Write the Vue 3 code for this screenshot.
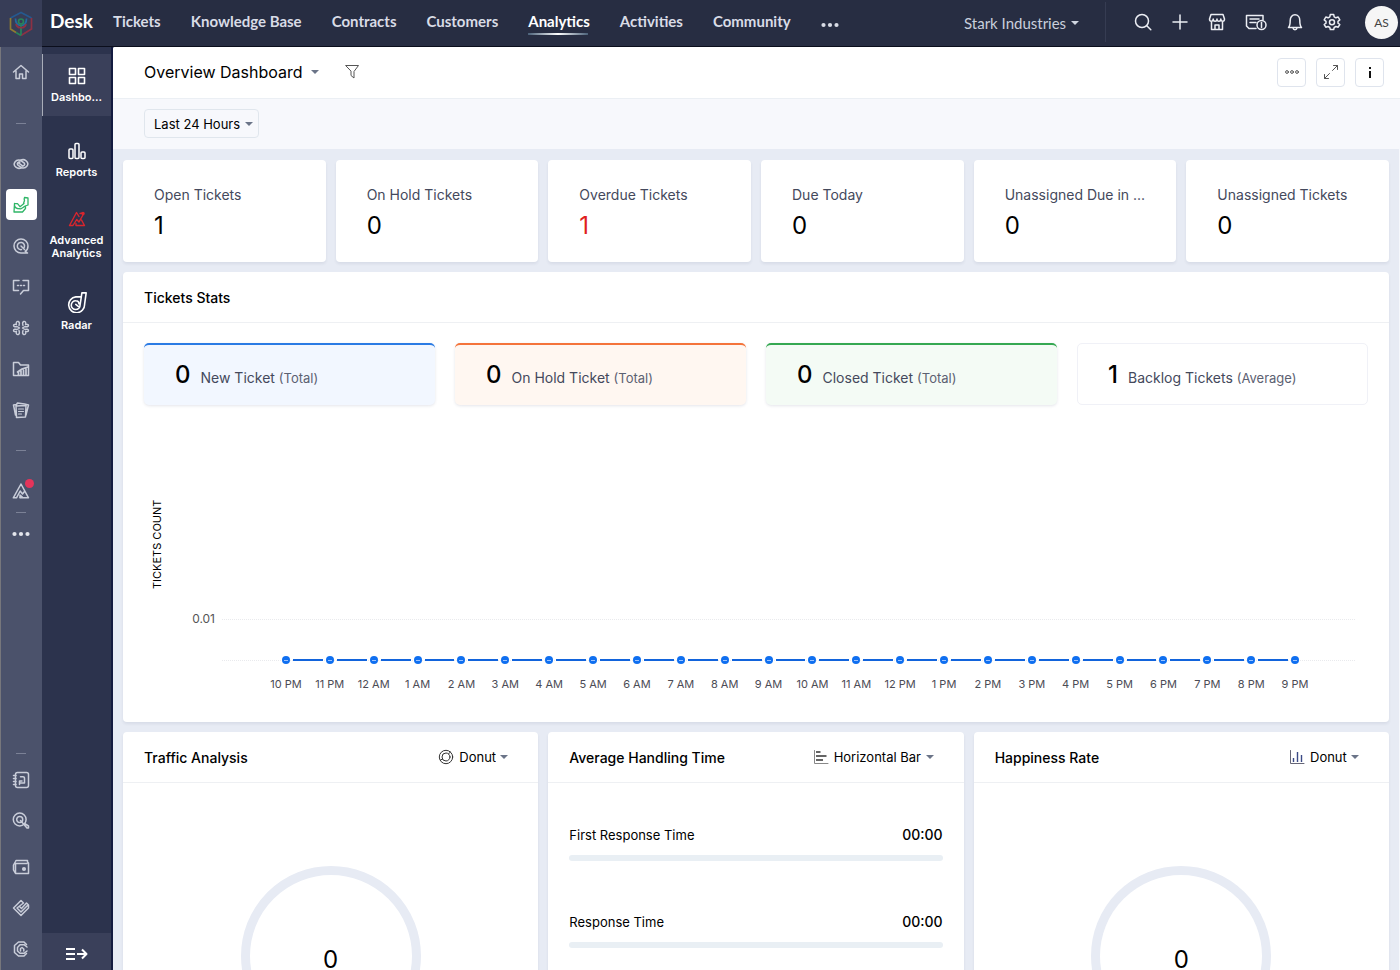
<script setup>
import { h } from 'vue'

const icons = {
  home: '<path d="M1.500 9 9 2.500 16.500 9M4 8v7.500h3.500v-4.500h3v4.500H14V8"/>',
  link: '<path d="M9.800 12.300A4.600 4.100 0 1 1 8.600 5.300L12.300 8.200A1.700 1.700 0 0 1 10.200 10.700L6.500 7.800"/><path d="M8.200 5.700A4.600 4.100 0 1 1 9.400 12.700L5.700 9.800A1.700 1.700 0 0 1 7.800 7.300"/>',
  desk: '<path d="M12.500 1.500 16 2v7l-4 1.500M12.500 1.500c-.6 1-.4 2 0 3l-1 3M2.500 7.500 2 16h8.500l3-3.500v-2M2.500 7.500l3 .2 2.500 3 4-3.200M2.500 7.500C2 10.500 3.500 12 5.500 12.500l3.500.3 4.500-2.800" stroke-width="1.300"/>',
  target: '<path d="M15.500 16H9A7 7 0 1 1 16 9c0 3-1.400 4.600-2.800 5.200L15.500 16"/><path d="M12.500 12.500 9 9M12.200 10.500A3.600 3.600 0 1 0 9.500 12.600"/>',
  chat: '<path d="M7 2.500H1.500v10h5M11 2.500h5.500v10h-5L8.500 16"/><path d="M5.500 7.500h1M8.500 7.500h1M11.500 7.500h1"/>',
  hub: '<path d="M7.500 9 5 7.500C3.500 8 1.500 8 1.500 6.500S4 5.500 4.500 5.500C3.500 3.500 5 2 6.300 2.500S7.500 5 7 6.500M7.500 9 5 10.500C3.500 10 1.500 10 1.500 11.500s2.500 1 3 1c-1 2 .5 3.500 1.800 3S7.500 13 7 11.500M10.500 9 13 7.500c1.500.5 3.500.5 3.500-1s-2.500-1-3-1c1-2-.5-3.500-1.800-3S10.500 5 11 6.500M10.500 9l2.500 1.500c1.500-.5 3.500-.5 3.500 1s-2.500 1-3 1c1 2-.5 3.500-1.800 3S10.500 13 11 11.500" stroke-width="1.400"/>',
  folder: '<path d="M4 15.500H1.500v-13h5l2 2.500h8v10.500H5"/><path d="M6.500 15v-2.500M9 15v-4M11.500 15v-5M14 15V9M5.500 12l4.500-3 6-2" stroke-width="1.700"/>',
  papers: '<path d="m4 5 10-.5-.5 11.500-9 .5zM3.500 14 1.500 4l3-.5 1-1.500 7 1M14 14l2.500-10L12.500 3"/><path d="M6.500 8h5M6.500 10.500h5M6.500 13h3" stroke-width="1.200"/>',
  peak: '<path d="M8 15.800H16.500L9 2 1.300 15.800H4.500L8.200 9l2.300 3L12.500 9.500"/><path d="M8 15.500v-2.500l2.300 2"/>',
  dots: '<g fill="currentColor" stroke="none"><circle cx="2.500" cy="9" r="2.100"/><circle cx="9" cy="9" r="2.100"/><circle cx="15.500" cy="9" r="2.100"/></g>',
  book: '<rect x="3.500" y="1.500" width="13" height="15" rx="2"/><path d="M1.500 4.500H4M1.500 7.500H4M1.500 10.500H4M1.500 13.500H4M12.500 9.500V7.200a1.500 1.500 0 0 0-1.500-1.500H8.500M12.500 8v4h-5v1.500M7.500 12.500V10H10"/>',
  lens: '<circle cx="7.700" cy="7.500" r="6.400"/><circle cx="7.700" cy="7.500" r="3"/><path d="m8.500 8.500 6.500 7.500h1.500v-2L12.500 11.500"/>',
  wallet: '<path d="M4 2.500h11.500v1.500L16.500 5v10.500H3.500L1.500 12V7l2-3.500zM3.500 5.500H15M3.500 5.500V15"/><circle cx="12" cy="11" r="1.300" fill="currentColor"/>',
  handshake: '<path d="M9 1.500 1.500 9 9 16.500 16.500 9V6L14.500 4 9.500 9.500 7.500 7.500M9 1.500l2.500 2.500L5 9l4 4 7-7"/>',
  contact: '<path d="M14.500 4.500 12 2H6.500L2.500 5.500v7L6.500 16H12l2.500-2.500M15 7l-3-2.300H8L5.500 7.500v3.500L8 13.300h4l3-2.300"/><path d="M8.500 11V8.500L10 7.500l1.800 1.500v2"/>',
  grid: '<g stroke-width="1.600"><rect x="1.500" y="1.500" width="6" height="6"/><rect x="10.500" y="1.500" width="6" height="6"/><rect x="1.500" y="10.500" width="6" height="6"/><rect x="10.500" y="10.500" width="6" height="6"/></g>',
  bars: '<rect x="1" y="7" width="4" height="9.500" rx="1"/><rect x="7" y="1.500" width="4" height="15" rx="1"/><rect x="13" y="10" width="4" height="6.500" rx="1"/>',
  analytics: '<path d="M12 3.500 15 3M1.500 15.500 8.500 2.500 11 6.500M13.500 10l3 5.500H8M1.500 15.500h3.500l3.700-6 2.300 2.500 4.500-8M8 15.500v-2" stroke-width="1.400"/><circle cx="15" cy="3.500" r="1" fill="currentColor"/>',
  radar: '<path d="M13 1.500h3.500l-1.300 9.500A6.500 6.500 0 1 1 8 4.800h4.500zM12.500 5l-1 6.500A3.600 3.600 0 1 1 8 8c1.600 0 2.600 1 2.600 2.500M8 11l2 1.500" stroke-width="1.300"/>',
  expand: '<g stroke-width="2" stroke-linecap="butt"><path d="M0 4h9M0 9h9M0 14h9M11 9h9.500M16 4.500 20.500 9 16 13.500"/></g>',
  search: '<circle cx="8" cy="8" r="6.500"/><path d="m12.800 12.800 4 4"/>',
  plus: '<path d="M9 2v14M2 9h14"/>',
  shop: '<path d="M3.500 9v7.500h11V9M3 1.500h12l1.500 4.500c0 3-3.500 3-3.700 0 0 3-3.800 3-3.800 0 0 3-3.800 3-3.800 0C5 9 1.500 9 1.500 6zM7 16v-4h4v4"/>',
  news: '<path d="M11 15.500H4L1.500 13V2.500h16.500V7"/><path d="M5 6h9M5 9.500h6"/><circle cx="16.500" cy="12" r="4.500"/><path d="M16.500 9.500v5"/>',
  bell: '<path d="M2.500 14.500c1.500-1.500 1.700-3 1.700-7C4.200 4.500 6 1.800 9 1.800s4.800 2.700 4.800 5.700c0 4 .2 5.500 1.700 7zM7 15c.3 2.300 3.700 2.300 4 0"/>',
  gear: '<path d="m7.300 1.500-.5 2.300-1.700 1-2.300-.8-1.600 2.800L3 8.300v1.900L1.200 11.500l1.600 2.700 2.300-.7 1.700 1 .5 2h3.400l.5-2 1.700-1 2.300.7 1.600-2.700L15 10.200V8.300l1.800-1.500L15.200 4l-2.300.8-1.700-1-.5-2.300z"/><circle cx="9" cy="9.200" r="2.500"/>',
  more: '<g stroke-width="1"><circle cx="4" cy="9" r="1.400"/><circle cx="9" cy="9" r="1.400"/><circle cx="14" cy="9" r="1.400"/></g>',
  resize: '<g stroke-width="1"><path d="M10.500 7.500l5-5M11.500 2.500h4v4M7.500 10.500l-5 5M2.500 11.500v4h4"/></g>',
  info: '<g stroke-width="2" stroke-linecap="butt"><path d="M9 8v7M9 4v2"/></g>',
  funnel: '<g stroke-width="1"><path d="M3 2.500h12.500L11 8.500v6.500l-3-2.500v-4z"/></g>',
  donut: '<g stroke-width="1"><circle cx="9" cy="9" r="6.700"/><circle cx="9" cy="9" r="4"/><path d="M11.500 5.800 13.500 4M5.500 11l-2 1"/></g>',
  hbar: '<path d="M2.500 2.500v13H16" stroke-width="1" stroke="#888"/><path d="M4 4h4.500M4 8h10.500M4 12h7" stroke-width="1.400" stroke-linecap="butt"/>',
  vbar: '<path d="M2.500 2.500v13H16" stroke-width="1" stroke="#667"/><path d="M5.500 14V10M9.500 14V4M13.500 14V7" stroke-width="1.400" stroke="#3b4a86" stroke-linecap="butt"/>'
}

const Icon = (props) =>
  h('svg', {
    viewBox: `0 0 ${props.wide ? 22 : 18} 18`,
    width: props.wide ? 22 : 18,
    height: 18,
    fill: 'none',
    stroke: 'currentColor',
    'stroke-width': 1.5,
    'stroke-linejoin': 'round',
    'stroke-linecap': 'round',
    'aria-hidden': 'true',
    innerHTML: icons[props.name]
  })
Icon.props = { name: String, wide: Boolean }

const Caret = () =>
  h('svg', { viewBox: '0 0 8 4', width: 8, height: 4, fill: 'currentColor', 'aria-hidden': 'true' }, [
    h('path', { d: 'M0 0h8L4 4z' })
  ])

const railApps = [
  { name: 'link', label: 'Connections' },
  { name: 'desk', label: 'Desk', active: true },
  { name: 'target', label: 'Sales' },
  { name: 'chat', label: 'Chat' },
  { name: 'hub', label: 'Social' },
  { name: 'folder', label: 'Projects' },
  { name: 'papers', label: 'Documents' }
]
const railTools = [
  { name: 'book', label: 'Directory' },
  { name: 'lens', label: 'Search apps' },
  { name: 'wallet', label: 'Wallet', spaced: true },
  { name: 'handshake', label: 'Partners' },
  { name: 'contact', label: 'Contact' }
]
const sideItems = [
  { icon: 'grid', label: 'Dashbo...', active: true },
  { icon: 'bars', label: 'Reports' },
  { icon: 'analytics', label: 'Advanced Analytics', alert: true },
  { icon: 'radar', label: 'Radar', large: true }
]
const tabs = ['Tickets', 'Knowledge Base', 'Contracts', 'Customers', 'Analytics', 'Activities', 'Community']
const actions = [
  { name: 'search', label: 'Search' },
  { name: 'plus', label: 'Add' },
  { name: 'shop', label: 'Marketplace' },
  { name: 'news', label: 'Updates', wide: true },
  { name: 'bell', label: 'Notifications' },
  { name: 'gear', label: 'Settings' }
]
const counts = [
  { label: 'Open Tickets', value: 1 },
  { label: 'On Hold Tickets', value: 0 },
  { label: 'Overdue Tickets', value: 1, red: true },
  { label: 'Due Today', value: 0 },
  { label: 'Unassigned Due in ...', value: 0 },
  { label: 'Unassigned Tickets', value: 0 }
]
const stats = [
  { value: 0, label: 'New Ticket', kind: 'Total', tone: 'blue' },
  { value: 0, label: 'On Hold Ticket', kind: 'Total', tone: 'orange' },
  { value: 0, label: 'Closed Ticket', kind: 'Total', tone: 'green' },
  { value: 1, label: 'Backlog Tickets', kind: 'Average', tone: 'plain' }
]
const hours = Array.from({ length: 24 }, (_, i) => {
  const hour = (22 + i) % 24
  return `${hour % 12 || 12} ${hour < 12 ? 'AM' : 'PM'}`
})
const panels = [
  { title: 'Traffic Analysis', icon: 'donut', view: 'Donut' },
  { title: 'Average Handling Time', icon: 'hbar', view: 'Horizontal Bar', rows: ['First Response Time', 'Response Time'] },
  { title: 'Happiness Rate', icon: 'vbar', view: 'Donut' }
]
</script>

<template>
  <div class="app">
    <nav class="rail" aria-label="Apps">
      <a href="#" class="logo" aria-label="Home page">
        <svg width="26" height="28" viewBox="0 0 26 28" fill="none" stroke-width="1.700">
          <path d="M2.500 8 13 2.500 23.500 8" stroke="#25598f" />
          <path d="M23.500 8v11L13 25.500" stroke="#8d3144" />
          <path d="M13 25.500 8 22.500" stroke="#27855a" />
          <path d="M8 22.500 2.500 19V8" stroke="#8f7b32" />
          <path d="M7.500 8.500c0 5 2 7 5.500 7s5.500-2 5.500-7" stroke="#246aa0" />
          <path d="M13 25V15" stroke="#27855a" />
          <path d="M8 14c1 5 9 5 10 0" stroke="#8d3144" />
          <circle cx="13" cy="11.500" r="2.500" stroke="#27855a" />
        </svg>
      </a>
      <a href="#" class="rail-item home" aria-label="Home"><Icon name="home" /></a>
      <span class="sep tall"></span>
      <a v-for="a in railApps" :key="a.name" href="#" class="rail-item" :class="{ active: a.active }" :aria-label="a.label">
        <span class="tile"><Icon :name="a.name" /></span>
      </a>
      <span class="sep"></span>
      <a href="#" class="rail-item" aria-label="Analytics">
        <span class="tile"><Icon name="peak" /><i class="badge"></i></span>
      </a>
      <span class="sep slim"></span>
      <a href="#" class="rail-item bright" aria-label="More apps"><Icon name="dots" /></a>
      <span class="sep last"></span>
      <a v-for="a in railTools" :key="a.name" href="#" class="rail-item" :class="{ spaced: a.spaced }" :aria-label="a.label">
        <Icon :name="a.name" />
      </a>
    </nav>

    <div class="shell">
      <header class="topbar">
        <a href="#" class="brand">Desk</a>
        <nav class="tabs" aria-label="Modules">
          <a v-for="t in tabs" :key="t" href="#" class="tab" :class="{ current: t === 'Analytics' }">{{ t }}</a>
          <button type="button" class="tab-more" aria-label="More modules"><Icon name="dots" /></button>
        </nav>
        <label class="pick org">
          <select aria-label="Department"><option>Stark Industries</option></select>
          <Caret />
        </label>
        <div class="actions">
          <button v-for="a in actions" :key="a.name" type="button" :aria-label="a.label">
            <Icon :name="a.name" :wide="a.wide" />
          </button>
        </div>
        <button type="button" class="avatar" aria-label="Account">AS</button>
      </header>

      <div class="body">
        <aside class="side">
          <a
            v-for="s in sideItems"
            :key="s.icon"
            href="#"
            class="side-item"
            :class="{ active: s.active, alert: s.alert, large: s.large }"
          >
            <Icon :name="s.icon" />
            <span>{{ s.label }}</span>
          </a>
          <button type="button" class="collapse" aria-label="Expand menu"><Icon name="expand" wide /></button>
        </aside>

        <main class="main">
          <div class="titlebar">
            <label class="pick title">
              <select aria-label="Dashboard"><option>Overview Dashboard</option></select>
              <Caret />
            </label>
            <button type="button" class="filter" aria-label="Filter"><Icon name="funnel" /></button>
            <div class="tools">
              <button type="button" aria-label="More"><Icon name="more" /></button>
              <button type="button" aria-label="Full screen"><Icon name="resize" /></button>
              <button type="button" class="strong" aria-label="Information"><Icon name="info" /></button>
            </div>
          </div>
          <div class="range">
            <label class="pick period">
              <select aria-label="Period"><option>Last 24 Hours</option></select>
              <Caret />
            </label>
          </div>

          <div class="content">
            <section class="counts">
              <article v-for="c in counts" :key="c.label" class="card count">
                <p>{{ c.label }}</p>
                <strong :class="{ red: c.red }">{{ c.value }}</strong>
              </article>
            </section>

            <section class="card">
              <h2 class="card-head">Tickets Stats</h2>
              <div class="stats">
                <div v-for="s in stats" :key="s.label" class="stat" :class="s.tone">
                  <strong>{{ s.value }}</strong>
                  <span>{{ s.label }} <small>({{ s.kind }})</small></span>
                </div>
              </div>
              <div class="chart">
                <div class="axis-title">TICKETS COUNT</div>
                <div class="tick">0.01</div>
                <div class="plot">
                  <div class="gridline"></div>
                  <div class="gridline base">
                    <div class="points"><i v-for="t in hours" :key="t"></i></div>
                  </div>
                  <div class="hours"><span v-for="t in hours" :key="t">{{ t }}</span></div>
                </div>
              </div>
            </section>

            <section class="panels">
              <article v-for="p in panels" :key="p.title" class="card panel">
                <div class="card-head">
                  <h2>{{ p.title }}</h2>
                  <label class="pick view">
                    <Icon :name="p.icon" />
                    <select :aria-label="p.title + ' chart type'"><option>{{ p.view }}</option></select>
                    <Caret />
                  </label>
                </div>
                <div v-if="p.rows" class="times">
                  <div v-for="r in p.rows" :key="r" class="time">
                    <span>{{ r }}</span><b>00:00</b>
                    <div class="bar"></div>
                  </div>
                </div>
                <div v-else class="ring">0</div>
              </article>
            </section>
          </div>
        </main>
      </div>
    </div>
  </div>
</template>

<style>
body {
  margin: 0;
  overflow: hidden;
}
</style>

<style scoped>
.app {
  display: flex;
  height: 100vh;
  font-family: Inter, "Liberation Sans", sans-serif;
  font-size: 14px;
  color: #000;
  background: #2c334d;
}
.app * {
  box-sizing: border-box;
}
a {
  color: inherit;
  text-decoration: none;
}
button,
select {
  font: inherit;
  color: inherit;
  background: none;
  border: 0;
  padding: 0;
  margin: 0;
  appearance: none;
  cursor: pointer;
}
button {
  display: grid;
  place-items: center;
}
h2,
p {
  margin: 0;
  font-size: 14px;
  font-weight: 500;
}
svg {
  display: block;
  flex: none;
}

.rail {
  flex: none;
  width: 42px;
  display: flex;
  flex-direction: column;
  padding-bottom: 1px;
  background: #4b526b;
  box-shadow: inset 1px 0 #77777c;
  color: #c9cdd9;
}
.logo {
  height: 47px;
  display: grid;
  place-items: center;
  background: #373d57;
  flex: none;
}
.rail-item {
  height: 41px;
  display: grid;
  place-items: center;
  flex: none;
}
.rail-item.home {
  margin-top: 4px;
}
.rail-item.spaced {
  margin-top: 5px;
}
.rail-item.bright {
  color: #e4e6ec;
}
.tile {
  position: relative;
  width: 31px;
  height: 31px;
  border-radius: 4px;
  display: grid;
  place-items: center;
}
.active .tile {
  background: #fff;
  color: #2fb567;
}
.badge {
  position: absolute;
  top: 4px;
  right: 3px;
  width: 9px;
  height: 9px;
  border-radius: 50%;
  background: #e5345a;
}
.sep {
  height: 40px;
  display: grid;
  place-items: center;
  flex: none;
}
.sep::before {
  content: "";
  width: 10px;
  height: 1px;
  background: #7b8196;
}
.sep.tall {
  height: 51px;
  padding-top: 12px;
}
.sep.slim {
  height: 2px;
}
.sep.last {
  height: 12px;
  margin-top: auto;
}

.shell {
  flex: 1;
  min-width: 0;
  display: flex;
  flex-direction: column;
}
.topbar {
  flex: none;
  height: 47px;
  display: flex;
  align-items: center;
  padding: 0 2px 2px 8px;
  background: #272d42;
  border-bottom: 1px solid #0b0e1c;
  color: #d9dce6;
  font-family: Lato, sans-serif;
  font-size: 15px;
}
.brand {
  font-size: 19px;
  font-weight: 700;
  line-height: 24px;
  padding-bottom: 2px;
  color: #fff;
  margin-right: 20px;
}
.tabs {
  display: flex;
  align-items: center;
  gap: 30px;
  padding-bottom: 2px;
  font-weight: 700;
}
.tab {
  position: relative;
  white-space: nowrap;
}
.tab.current {
  color: #fff;
}
.tab.current::after {
  content: "";
  position: absolute;
  left: 0;
  right: 2px;
  bottom: -5px;
  height: 2px;
  background: linear-gradient(90deg, #4a6078, #fff 50%, #4a6078);
}
.tab-more {
  padding-top: 8px;
}
.pick {
  display: inline-grid;
  align-items: center;
  color: #000;
}
.pick select {
  grid-area: 1 / 1;
  padding-right: 12px;
}
.pick > svg:last-child {
  grid-area: 1 / 1;
  justify-self: end;
  color: #6b7488;
  pointer-events: none;
}
.pick.org {
  margin-left: auto;
  color: #c9cfdc;
  padding-top: 1px;
  padding-right: 26px;
}
.pick.org > svg:last-child {
  color: #d0d5e0;
}
.actions {
  display: flex;
  align-items: center;
  gap: 19px;
  height: 40px;
  padding: 0 24px 0 28px;
  border-left: 1px solid #363c52;
  color: #eceef4;
}
.avatar {
  width: 33px;
  height: 33px;
  border-radius: 50%;
  background: #f6f6f6;
  color: #444;
  font-size: 12px;
}

.body {
  flex: 1;
  min-height: 0;
  display: flex;
}
.side {
  flex: none;
  width: 71px;
  display: flex;
  flex-direction: column;
  gap: 6px;
  padding-top: 7px;
  border-right: 2px solid #141b40;
  color: #fff;
}
.side-item {
  display: flex;
  flex-direction: column;
  align-items: center;
  gap: 6px;
  min-height: 62px;
  padding: 13px 1px 12px;
  text-align: center;
  font-size: 11px;
  font-weight: 600;
  line-height: 13px;
}
.side-item.active {
  margin-bottom: 7px;
  background: #3a405a;
  box-shadow: inset 1px 0 #a9adb9;
}
.side-item.alert svg {
  color: #d9262e;
}
.side-item.large svg {
  width: 22px;
  height: 22px;
}
.collapse {
  margin-top: auto;
  height: 37px;
  padding-top: 5px;
  background: #3a405a;
}

.main {
  flex: 1;
  min-width: 0;
  display: flex;
  flex-direction: column;
  background: #e7ebf4;
  border-top-left-radius: 2px;
  overflow: hidden;
}
.titlebar {
  flex: none;
  height: 52px;
  display: flex;
  align-items: center;
  padding: 0 16px 1px 31px;
  background: #fff;
  border-bottom: 1px solid #ebeff4;
}
.pick.title {
  font-size: 16px;
}
.pick.title select {
  padding-right: 16px;
}
.filter {
  margin-left: 24px;
  color: #555;
}
.tools {
  margin-left: auto;
  display: flex;
  gap: 10px;
  color: #555;
}
.tools button {
  width: 29px;
  height: 29px;
  border: 1px solid #dfe4ed;
  border-radius: 4px;
}
.tools .strong {
  color: #111;
}
.range {
  flex: none;
  height: 50px;
  padding: 10px 31px;
  background: #f7f8fc;
}
.pick.period {
  height: 29px;
  padding: 0 5px 0 9px;
  border: 1px solid #e0e6ed;
  border-radius: 4px;
  font-size: 13px;
}
.content {
  flex: 1;
  min-height: 0;
  overflow: hidden;
  display: flex;
  flex-direction: column;
  gap: 10px;
  padding: 11px 10px 0 10px;
  border-right: 1px solid #f6f8fc;
}
.card {
  background: #fff;
  border-radius: 4px;
  box-shadow: 0 2px 3px rgba(40, 50, 90, 0.08);
}
.counts {
  display: grid;
  grid-template-columns: repeat(6, minmax(0, 1fr));
  gap: 10px;
}
.count {
  height: 102px;
  padding: 26px 31px;
}
.count p {
  font-weight: 400;
  line-height: 18px;
  color: #44495c;
  white-space: nowrap;
}
.count strong {
  display: block;
  margin-top: 6px;
  font-size: 24px;
  line-height: 32px;
  font-weight: 400;
}
.count .red {
  color: #e01e1e;
}
.card-head {
  height: 51px;
  display: flex;
  align-items: center;
  justify-content: space-between;
  padding: 0 21px;
  border-bottom: 1px solid #eef0f3;
}
.stats {
  display: grid;
  grid-template-columns: repeat(4, minmax(0, 1fr));
  gap: 20px;
  padding: 20px 21px 0;
}
.stat {
  display: flex;
  align-items: baseline;
  gap: 10px;
  height: 62px;
  padding: 15px 31px;
  border-radius: 5px;
  border-top: 2px solid;
  box-shadow: 0 1px 3px rgba(40, 50, 90, 0.12);
  white-space: nowrap;
}
.stat strong {
  font-size: 24px;
  line-height: 30px;
  font-weight: 500;
  color: #000;
}
.stat span {
  color: #44495c;
}
.stat small {
  font-size: 13px;
  color: #5c6172;
}
.blue {
  background: #f2f7ff;
  border-color: #2b7be4;
}
.orange {
  background: #fff7f1;
  border-color: #f4743b;
}
.green {
  background: #f4fbf5;
  border-color: #35a852;
}
.plain {
  border: 1px solid #f0f1f7;
  box-shadow: none;
  padding: 16px 30px;
}
.chart {
  display: flex;
  height: 317px;
  padding: 96px 34px 0 26px;
}
.axis-title {
  writing-mode: vertical-rl;
  transform: rotate(180deg);
  width: 16px;
  height: 88px;
  font-size: 11px;
  line-height: 16px;
  white-space: nowrap;
}
.tick {
  width: 50px;
  padding-top: 109px;
  text-align: right;
  font-size: 12px;
  line-height: 18px;
  color: #555;
}
.plot {
  flex: 1;
  min-width: 0;
  margin-left: 7px;
  padding-top: 118px;
}
.gridline {
  height: 41px;
  border-top: 1px dotted #e9eaed;
}
.gridline.base {
  height: 16px;
}
.points,
.hours {
  display: grid;
  grid-template-columns: repeat(24, minmax(0, 1fr));
  margin: 0 38px 0 42px;
}
.points i {
  position: relative;
  height: 8px;
  margin-top: -5px;
}
.points i::before {
  content: "";
  position: absolute;
  left: calc(50% - 4px);
  width: 8px;
  height: 8px;
  border-radius: 50%;
  background: linear-gradient(#9cc4ff, #9cc4ff) center / 4px 1px no-repeat, #0f6ff0;
}
.points i:not(:last-child)::after {
  content: "";
  position: absolute;
  top: 3px;
  left: calc(50% + 7px);
  width: calc(100% - 14px);
  height: 2px;
  background: #1264dc;
}
.hours {
  font-size: 11px;
  line-height: 16px;
  text-align: center;
  color: #4c4c55;
  white-space: nowrap;
}
.panels {
  display: grid;
  grid-template-columns: repeat(3, minmax(0, 1fr));
  gap: 10px;
}
.panel {
  height: 400px;
}
.pick.view {
  grid-template-columns: 18px auto;
  column-gap: 4px;
  margin-right: 9px;
  font-size: 13px;
}
.pick.view > svg:first-child {
  color: #333;
}
.pick.view select,
.pick.view > svg:last-child {
  grid-area: 1 / 2;
}
.ring {
  width: 180px;
  height: 180px;
  margin: 83px auto 0;
  padding-top: 8px;
  display: grid;
  place-items: center;
  border: 9px solid #e7ebf4;
  border-radius: 50%;
  font-size: 24px;
  line-height: 20px;
}
.times {
  padding: 42px 21px;
}
.time {
  display: grid;
  grid-template-columns: 1fr auto;
  row-gap: 10px;
  height: 87px;
  align-content: start;
  font-size: 13px;
  line-height: 20px;
}
.time b {
  font-size: 14px;
  font-weight: 500;
}
.bar {
  grid-column: 1 / -1;
  height: 6px;
  border-radius: 3px;
  background: #e9eff4;
}
</style>
